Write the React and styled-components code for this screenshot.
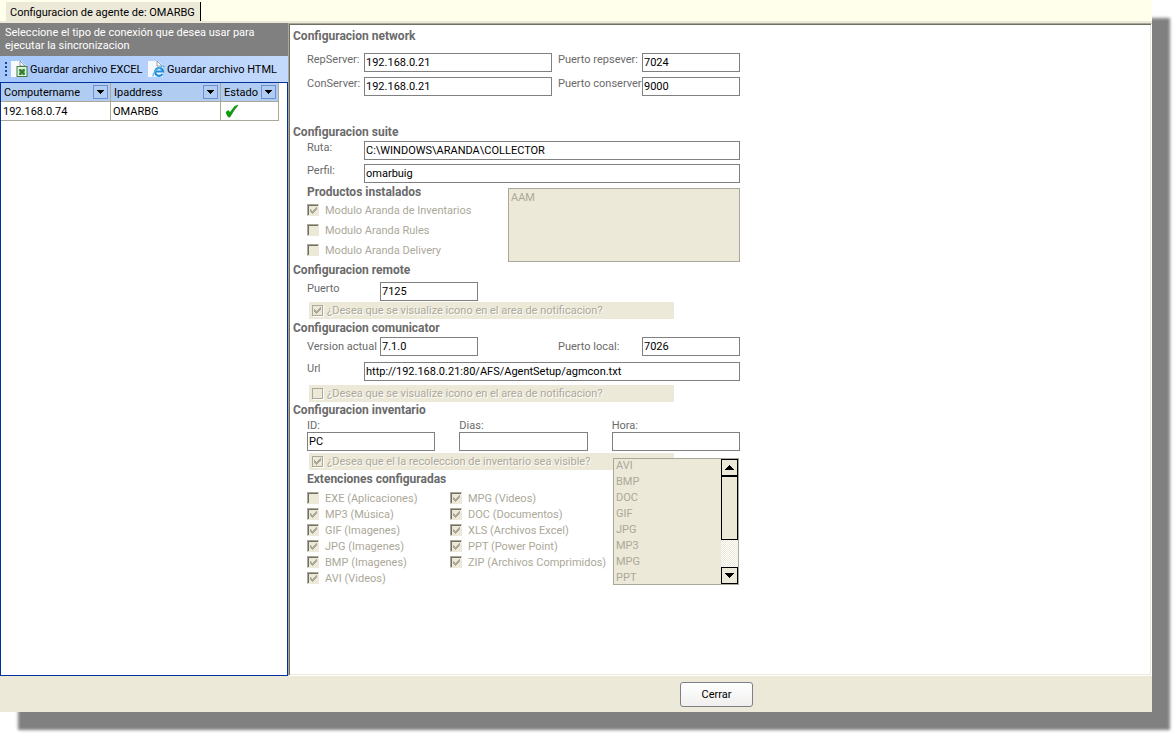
import React from 'react';
import styled, { createGlobalStyle, css } from 'styled-components';

const face = '#ece9d8';
const faded = '#aca899';
const ink = '#6a6a6a';
const navy = '#00309c';

const GlobalStyle = createGlobalStyle`
  *, *::before, *::after { box-sizing: border-box; }
  body {
    margin: 0;
    background: #fff;
    color: #000;
    font: 11px/13px Roboto, "Liberation Sans", sans-serif;
  }
  button, input, select, textarea { font: inherit; color: inherit; margin: 0; }
`;

const Page = styled.div`
  padding: 0 22px 22px 0;
  overflow: hidden;
`;

const Window = styled.div`
  display: flex;
  flex-direction: column;
  min-height: calc(100vh - 22px);
  background: ${face};
  box-shadow: 18px 18px 3px #808080;
`;

const TabBar = styled.header`
  display: flex;
  align-items: flex-end;
  height: 23px;
  padding: 2px 6px 0;
  background: #ffffec;
  border-bottom: 2px solid ${face};
`;

const Tab = styled.h1`
  margin: 0;
  padding: 2px 5px 0 4px;
  font-size: 11px;
  font-weight: 400;
  line-height: 17px;
  background: ${face};
  border-right: 1px solid #000;
`;

const Body = styled.main`
  display: flex;
  flex: 1;
`;

const Sidebar = styled.aside`
  display: flex;
  flex-direction: column;
  flex: 0 0 288px;
`;

const Hint = styled.p`
  height: 33px;
  margin: 0;
  padding: 3px 30px 0 5px;
  background: #808080;
  color: #fff;
`;

const Toolbar = styled.div`
  display: flex;
  align-items: center;
  height: 26px;
  padding-left: 5px;
  background: linear-gradient(90deg, #a5c7fa, #c4dafc);
`;

const Grip = styled.span`
  width: 2px;
  height: 14px;
  margin-right: 4px;
  background: repeating-linear-gradient(#27418a 0 2px, transparent 2px 4px);
`;

const ToolButton = styled.button`
  display: flex;
  align-items: center;
  gap: 2px;
  width: 137px;
  padding: 0;
  border: 0;
  background: none;
  white-space: nowrap;
  svg { flex: none; }
`;

const GridPane = styled.div`
  flex: 1;
  background: #fff;
  border: 1px solid ${navy};
`;

const Table = styled.table`
  width: 278px;
  table-layout: fixed;
  border-collapse: separate;
  border-spacing: 0;
`;

const HeadCell = styled.th`
  width: ${(p) => p.$w}px;
  height: 19px;
  padding: 0 2px 0 3px;
  background: #b1ccf1;
  border-right: 1px solid ${faded};
  border-bottom: 1px solid ${faded};
  font-weight: 400;
  text-align: left;
`;

const HeadContent = styled.div`
  display: flex;
  align-items: center;
  justify-content: space-between;
`;

const FilterButton = styled.button`
  display: grid;
  place-items: center;
  width: 15px;
  height: 14px;
  padding: 0;
  background: #b1ccf1;
  border: 1px solid #6f8fd0;
`;

const Cell = styled.td`
  height: 19px;
  padding: 0 2px;
  border-right: 1px solid ${faded};
  border-bottom: 1px solid ${faded};
  svg { display: block; margin-left: 2px; }
`;

const Panel = styled.section`
  flex: 1;
  min-width: 0;
  padding: 4px 4px 1px;
  background: #fff;
  border: 1px solid;
  border-color: ${faded} #fff #fff ${faded};
  box-shadow: inset 1px 1px 0 #716f64, inset -1px -1px 0 ${face};
`;

const Form = styled.form`
  display: flex;
  flex-direction: column;
  max-width: 447px;
`;

const Heading = styled.h2`
  margin: 0;
  color: ${ink};
  font-size: 12px;
  font-weight: 700;
  line-height: 16px;
`;

const Section = styled.fieldset`
  display: flex;
  flex-direction: column;
  min-width: 0;
  margin: 0 0 ${(p) => p.$after || 0}px;
  padding: 0;
  border: 0;
`;

const Fields = styled.div`
  display: flex;
  flex-direction: column;
  gap: ${(p) => p.$gap || 0}px;
  padding: ${(p) => p.$top || 0}px 0 0 14px;
`;

const layouts = {
  pair: '57px 188px 6px 84px 98px',
  wide: '57px 1fr',
  short: '73px 98px 80px 84px 98px',
};

const Row = styled.div`
  display: grid;
  grid-template-columns: ${(p) => layouts[p.$layout]};
  align-items: ${(p) => (p.$centered ? 'center' : 'start')};
`;

const Triple = styled.div`
  display: grid;
  grid-template-columns: repeat(3, 1fr);
  gap: 24px;
  label { display: block; }
`;

const Label = styled.label`
  color: ${ink};
  white-space: nowrap;
`;

const TextBox = styled.input`
  display: block;
  width: 100%;
  height: 19px;
  padding: 0 2px 1px 1px;
  border: 1px solid #808080;
  border-radius: 0;
  background: #fff;
`;

const Products = styled.div`
  display: grid;
  grid-template-columns: 201px 1fr;
  padding: 1px 0 0 14px;
`;

const Memo = styled.textarea`
  display: block;
  width: 100%;
  height: 74px;
  margin-top: 4px;
  padding: 2px;
  resize: none;
  background: ${face};
  border: 1px solid ${faded};
  border-radius: 0;
  color: ${faded};
`;

const CheckList = styled.div`
  display: flex;
  flex-direction: column;
  padding-top: ${(p) => p.$top || 0}px;
`;

const CheckLabel = styled.label`
  display: flex;
  align-items: center;
  gap: 6px;
  height: ${(p) => p.$pitch || 16}px;
  color: ${faded};
  white-space: nowrap;
`;

const Band = styled(CheckLabel)`
  width: 365px;
  height: 17px;
  margin: ${(p) => p.$top || 0}px 0 0 ${(p) => p.$indent || 0}px;
  padding-left: 3px;
  gap: 4px;
  background: ${face};
  text-shadow: 1px 1px 0 #fff;
`;

const Tick = styled.span`
  display: grid;
  place-items: center;
  flex: none;
  > * { grid-area: 1 / 1; }
  svg { pointer-events: none; }
`;

const TickInput = styled.input`
  appearance: none;
  width: ${(p) => (p.$flat ? 11 : 12)}px;
  height: ${(p) => (p.$flat ? 11 : 12)}px;
  background: ${face};
  ${(p) => p.$flat
    ? css`border: 1px solid ${faded}; box-shadow: 1px 1px 0 #fff;`
    : css`
      border: 1px solid ${face};
      border-top-color: ${faded};
      border-left-color: ${faded};
      box-shadow: inset 1px 1px 0 #716f64;
    `}
`;

const Inventory = styled.div`
  display: grid;
  grid-template-columns: 143px 163px 126px;
  padding: 2px 0 0 14px;
`;

const BandSlot = styled.div`
  grid-area: 1 / 1 / 2 / 4;
  padding-left: 2px;
`;

const ExtHeading = styled(Heading)`
  grid-area: 2 / 1 / 3 / 3;
  padding-top: 1px;
`;

const ListBox = styled.div`
  display: flex;
  grid-area: 1 / 3 / 4 / 4;
  height: 127px;
  margin-top: 5px;
  background: ${face};
  border: 1px solid ${faded};
`;

const List = styled.select`
  flex: 1;
  min-width: 0;
  height: 125px;
  padding: 0;
  overflow: hidden;
  background: ${face};
  border: 0;
  border-radius: 0;
  opacity: 1;
  option {
    min-height: 16px;
    padding: 0 2px;
    color: ${faded};
    line-height: 16px;
  }
`;

const ScrollBar = styled.div`
  display: flex;
  flex-direction: column;
  width: 17px;
  background: repeating-conic-gradient(${face} 0 25%, #fff 0 50%) 0 0 / 2px 2px;
`;

const ScrollButton = styled.button`
  display: grid;
  place-items: center;
  height: 17px;
  padding: 0;
  background: ${face};
  border: 1px solid #000;
`;

const Thumb = styled.div`
  height: 64px;
  margin-bottom: auto;
  background: ${face};
  border: 1px solid #000;
`;

const Footer = styled.footer`
  display: flex;
  justify-content: center;
  height: 36px;
  padding: 6px 0 0 281px;
`;

const CloseButton = styled.button`
  width: 73px;
  height: 25px;
  padding: 0;
  background: linear-gradient(#fff, #f0efee);
  border: 1px solid #7b8087;
  border-radius: 3px;
`;

function Arrow({ up, small }) {
  return (
    <svg width={small ? 7 : 9} height={small ? 4 : 5} viewBox="0 0 9 5" preserveAspectRatio="none" shapeRendering="crispEdges" aria-hidden="true">
      <path d={up ? 'M0 5h9v-1h-1v-1h-1v-1h-1v-1h-1v-1h-1v1h-1v1h-1v1h-1v1h-1z' : 'M0 0h9v1h-1v1h-1v1h-1v1h-1v1h-1v-1h-1v-1h-1v-1h-1v-1h-1z'} />
    </svg>
  );
}

function PageShape() {
  return (
    <>
      <path d="M0 1h10l5 5v11H0z" fill="#f7f9fd" />
      <path d="M9 1v5h5z" fill="#fff" stroke="#7c8798" strokeWidth=".8" />
    </>
  );
}

function ExcelIcon() {
  return (
    <svg width="17" height="18" viewBox="0 0 17 18" aria-hidden="true">
      <PageShape />
      <rect x="6" y="6.500" width="10" height="10" fill="#e4f1de" stroke="#3f7d40" />
      <rect x="8" y="9" width="6" height="6" fill="#8fc089" />
      <path d="M8.500 9.500l5 5M13.500 9.500l-5 5" stroke="#277d2b" strokeWidth="1.8" />
    </svg>
  );
}

function HtmlIcon() {
  return (
    <svg width="17" height="18" viewBox="0 0 17 18" aria-hidden="true">
      <PageShape />
      <path d="M14.500 14a4 4 0 1 1 .6-2.500H7.500" fill="none" stroke="#1f8fdf" strokeWidth="2.2" />
      <path d="M5.500 16.500c-1.500-1 .5-4.500 4-7.500s7-4 6.500-1.500" fill="none" stroke="#56b5ee" strokeWidth="1.1" />
    </svg>
  );
}

function StatusOk() {
  return (
    <svg width="14" height="14" viewBox="0 0 14 14" role="img" aria-label="Activo">
      <path d="M1 9l2-1.500 2 1.500L10 3l3.500-2L9 7l-4 6.500H3.500z" fill="#777" />
      <path d="M1 8l2.500-1.500 1.500 2L9.500 2.500 13 1 8.500 6 5 12.500H3z" fill="#00a000" stroke="#00a000" strokeWidth=".6" />
    </svg>
  );
}

function CheckBox({ checked, flat }) {
  return (
    <Tick>
      <TickInput type="checkbox" defaultChecked={checked} disabled $flat={flat} />
      {checked && (
        <svg width="7" height="7" viewBox="0 0 7 7" shapeRendering="crispEdges" aria-hidden="true">
          <path fill={faded} d="M0 2h1v3H0zM1 3h1v3H1zM2 4h1v3H2zM3 3h1v3H3zM4 2h1v3H4zM5 1h1v3H5zM6 0h1v3H6z" />
        </svg>
      )}
    </Tick>
  );
}

function Check({ children, checked, pitch }) {
  return <CheckLabel $pitch={pitch}><CheckBox checked={checked} />{children}</CheckLabel>;
}

function Notice({ children, checked, indent, top }) {
  return <Band $indent={indent} $top={top}><CheckBox flat checked={checked} />{children}</Band>;
}

function Field({ id, label, value = '' }) {
  return (
    <>
      <Label htmlFor={id}>{label}</Label>
      <TextBox id={id} defaultValue={value} />
    </>
  );
}

const columns = [['Computername', 110], ['Ipaddress', 110], ['Estado', 58]];
const formats = ['AVI', 'BMP', 'DOC', 'GIF', 'JPG', 'MP3', 'MPG', 'PPT', 'XLS', 'ZIP'];

export default function App() {
  return (
    <Page>
      <GlobalStyle />
      <Window>
        <TabBar><Tab>Configuracion de agente de: OMARBG</Tab></TabBar>
        <Body>
          <Sidebar>
            <Hint>Seleccione el tipo de conexión que desea usar para ejecutar la sincronizacion</Hint>
            <Toolbar>
              <Grip />
              <ToolButton type="button"><ExcelIcon />Guardar archivo EXCEL</ToolButton>
              <ToolButton type="button"><HtmlIcon />Guardar archivo HTML</ToolButton>
            </Toolbar>
            <GridPane>
              <Table>
                <thead>
                  <tr>
                    {columns.map(([name, w]) => (
                      <HeadCell key={name} $w={w}>
                        <HeadContent>
                          {name}
                          <FilterButton type="button" aria-label={`Filtrar ${name}`}><Arrow small /></FilterButton>
                        </HeadContent>
                      </HeadCell>
                    ))}
                  </tr>
                </thead>
                <tbody>
                  <tr>
                    <Cell>192.168.0.74</Cell>
                    <Cell>OMARBG</Cell>
                    <Cell><StatusOk /></Cell>
                  </tr>
                </tbody>
              </Table>
            </GridPane>
          </Sidebar>

          <Panel>
            <Form>
              <Section $after={28}>
                <Heading>Configuracion network</Heading>
                <Fields $top={9} $gap={5}>
                  <Row $layout="pair">
                    <Field id="rep" label="RepServer:" value="192.168.0.21" /><span />
                    <Field id="repPort" label="Puerto repsever:" value="7024" />
                  </Row>
                  <Row $layout="pair">
                    <Field id="con" label="ConServer:" value="192.168.0.21" /><span />
                    <Field id="conPort" label="Puerto conserver" value="9000" />
                  </Row>
                </Fields>
              </Section>

              <Section>
                <Heading>Configuracion suite</Heading>
                <Fields $top={1} $gap={4}>
                  <Row $layout="wide"><Field id="path" label="Ruta:" value="C:\WINDOWS\ARANDA\COLLECTOR" /></Row>
                  <Row $layout="wide"><Field id="profile" label="Perfil:" value="omarbuig" /></Row>
                </Fields>
                <Products>
                  <div>
                    <Heading as="h3">Productos instalados</Heading>
                    <CheckList>
                      <Check checked pitch={20}>Modulo Aranda de Inventarios</Check>
                      <Check pitch={20}>Modulo Aranda Rules</Check>
                      <Check pitch={20}>Modulo Aranda Delivery</Check>
                    </CheckList>
                  </div>
                  <Memo aria-label="Productos" defaultValue="AAM" disabled />
                </Products>
              </Section>

              <Section $after={1}>
                <Heading>Configuracion remote</Heading>
                <Fields $top={4}>
                  <Row $layout="short"><Field id="port" label="Puerto" value="7125" /></Row>
                </Fields>
                <Notice checked indent={16} top={1}>¿Desea que se visualize icono en el area de notificacion?</Notice>
              </Section>

              <Section>
                <Heading>Configuracion comunicator</Heading>
                <Fields $top={1} $gap={6}>
                  <Row $layout="short" $centered>
                    <Field id="version" label="Version actual" value="7.1.0" /><span />
                    <Field id="localPort" label="Puerto local:" value="7026" />
                  </Row>
                  <Row $layout="wide"><Field id="url" label="Url" value="http://192.168.0.21:80/AFS/AgentSetup/agmcon.txt" /></Row>
                </Fields>
                <Notice indent={16} top={4}>¿Desea que se visualize icono en el area de notificacion?</Notice>
              </Section>

              <Section>
                <Heading>Configuracion inventario</Heading>
                <Fields $top={1}>
                  <Triple>
                    <div><Field id="pcId" label="ID:" value="PC" /></div>
                    <div><Field id="days" label="Dias:" /></div>
                    <div><Field id="hour" label="Hora:" /></div>
                  </Triple>
                </Fields>
                <Inventory>
                  <BandSlot><Notice checked>¿Desea que el la recoleccion de inventario sea visible?</Notice></BandSlot>
                  <ExtHeading as="h3">Extenciones configuradas</ExtHeading>
                  <CheckList $top={3}>
                    <Check>EXE (Aplicaciones)</Check>
                    <Check checked>MP3 (Música)</Check>
                    <Check checked>GIF (Imagenes)</Check>
                    <Check checked>JPG (Imagenes)</Check>
                    <Check checked>BMP (Imagenes)</Check>
                    <Check checked>AVI (Videos)</Check>
                  </CheckList>
                  <CheckList $top={3}>
                    <Check checked>MPG (Videos)</Check>
                    <Check checked>DOC (Documentos)</Check>
                    <Check checked>XLS (Archivos Excel)</Check>
                    <Check checked>PPT (Power Point)</Check>
                    <Check checked>ZIP (Archivos Comprimidos)</Check>
                  </CheckList>
                  <ListBox>
                    <List multiple size={8} disabled aria-label="Extenciones">
                      {formats.map((f) => <option key={f}>{f}</option>)}
                    </List>
                    <ScrollBar>
                      <ScrollButton type="button" aria-label="Subir"><Arrow up /></ScrollButton>
                      <Thumb />
                      <ScrollButton type="button" aria-label="Bajar"><Arrow /></ScrollButton>
                    </ScrollBar>
                  </ListBox>
                </Inventory>
              </Section>
            </Form>
          </Panel>
        </Body>
        <Footer><CloseButton type="button">Cerrar</CloseButton></Footer>
      </Window>
    </Page>
  );
}
